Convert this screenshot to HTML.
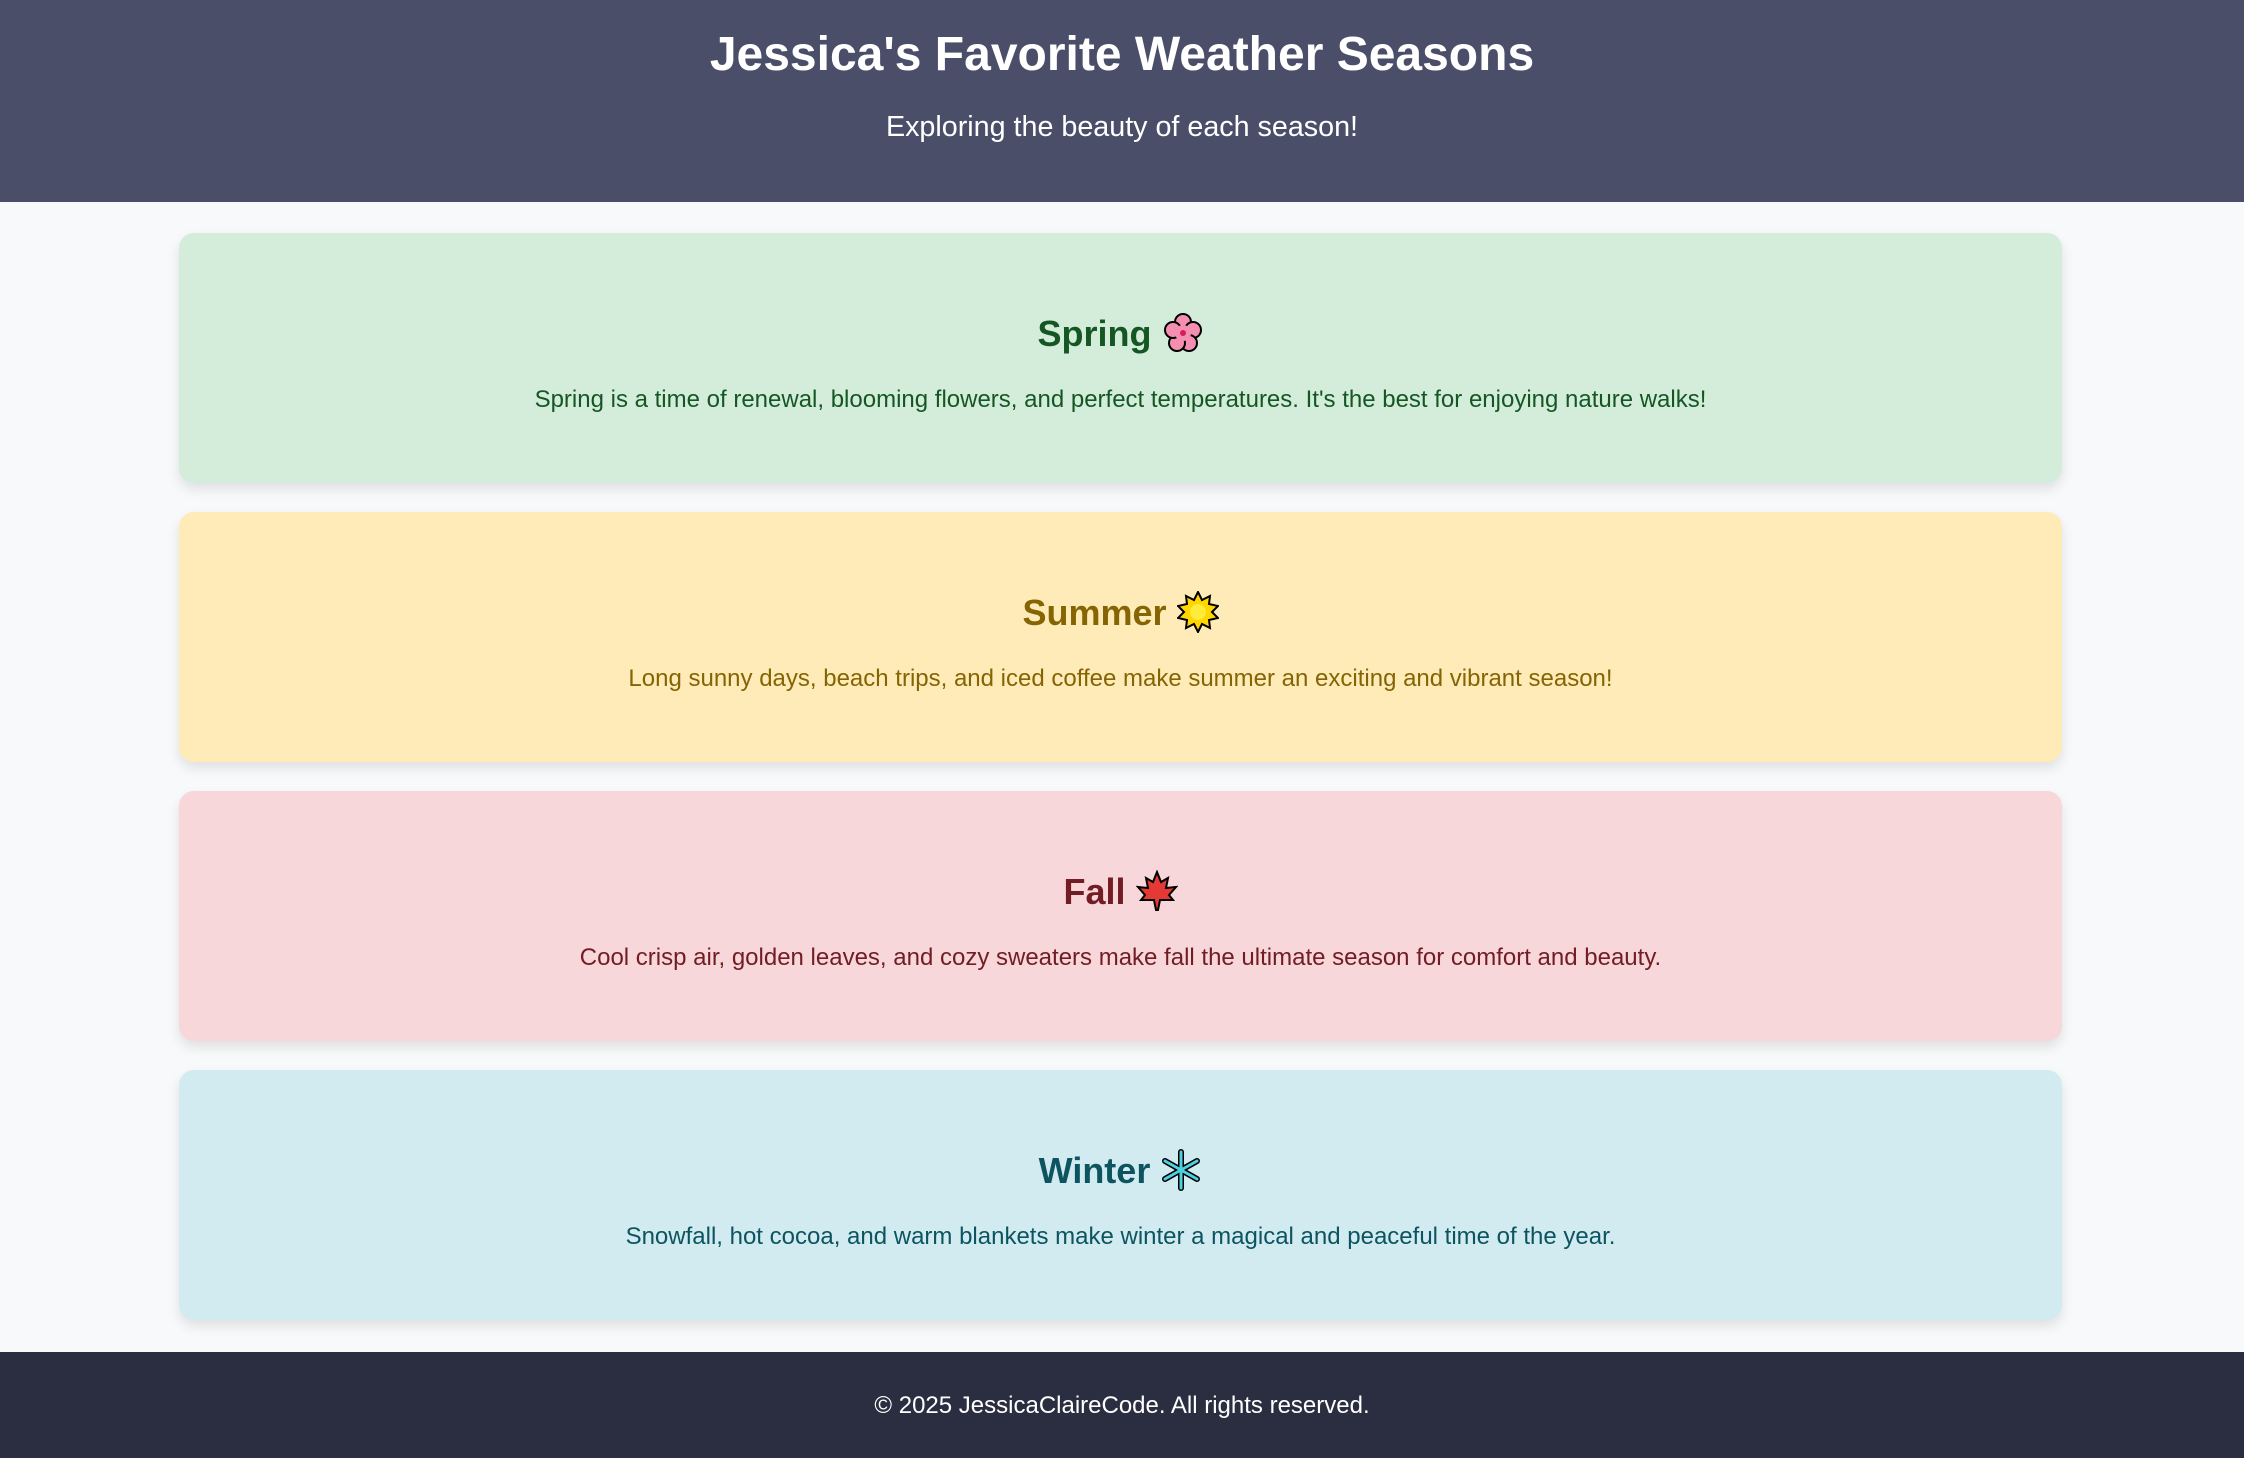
<!DOCTYPE html>
<html><head><meta charset="utf-8">
<style>
*{margin:0;padding:0;box-sizing:border-box}
html,body{width:2244px;height:1458px;overflow:hidden}
body{background:#f8f9fa;font-family:"Liberation Sans",Arial,sans-serif;position:relative}
header{position:absolute;left:0;top:0;width:2244px;height:202px;background:#4a4e69;color:#fff;text-align:center}
header h1{position:absolute;left:0;right:0;top:27px;font-size:48px;line-height:56px;font-weight:bold}
header p{position:absolute;left:0;right:0;top:109px;font-size:28.7px;line-height:36px}
.card{position:absolute;left:179px;width:1883px;height:250px;border-radius:15px;box-shadow:0 6px 12px rgba(0,0,0,0.1);text-align:center}
.card h2{position:absolute;left:0;right:0;top:77px;font-size:36px;line-height:48px;font-weight:bold}
.card h2 svg{vertical-align:-8px}
.card p{position:absolute;left:0;right:0;top:152px;font-size:24px;line-height:30px}
footer{position:absolute;left:0;top:1352px;width:2244px;height:106px;background:#2b2d40;color:#fff;text-align:center;font-size:24px;line-height:108px}
</style></head><body>
<header><h1>Jessica's Favorite Weather Seasons</h1><p>Exploring the beauty of each season!</p></header>

<div class="card" style="top:233px;background:#d4edda;color:#155724"><h2>Spring <svg width="42" height="42" viewBox="0 0 42 42"><g stroke="#000" stroke-width="2" fill="#f48fb1"><circle cx="21" cy="10" r="8"/><circle cx="31" cy="18" r="8"/><circle cx="27" cy="31" r="8"/><circle cx="15" cy="31" r="8"/><circle cx="11" cy="18" r="8"/></g><circle cx="21" cy="21" r="8" fill="#f48fb1"/><circle cx="21" cy="21" r="3" fill="#d81b60"/></svg></h2><p>Spring is a time of renewal, blooming flowers, and perfect temperatures. It's the best for enjoying nature walks!</p></div>

<div class="card" style="top:512px;background:#ffebb8;color:#856404"><h2>Summer <svg width="42" height="42" viewBox="0 0 42 42"><polygon points="21,1 25,9 33,5 32,13 41,15 35,21 41,27 32,29 33,37 25,33 21,41 17,33 9,37 10,29 1,27 7,21 1,15 10,13 9,5 17,9" fill="#ffd600" stroke="#000" stroke-width="2"/><circle cx="21" cy="21" r="8" fill="#ffeb3b"/></svg></h2><p>Long sunny days, beach trips, and iced coffee make summer an exciting and vibrant season!</p></div>

<div class="card" style="top:791px;background:#f7d7da;color:#721c24"><h2>Fall <svg width="42" height="42" viewBox="0 0 42 42"><polygon points="21,2 25,12 32,8 30,18 40,17 33,25 37,30 24,30 22,40 20,40 18,30 5,30 9,25 2,17 12,18 10,8 17,12" fill="#e53935" stroke="#000" stroke-width="2"/></svg></h2><p>Cool crisp air, golden leaves, and cozy sweaters make fall the ultimate season for comfort and beauty.</p></div>

<div class="card" style="top:1070px;background:#d1ebf0;color:#0c5460"><h2>Winter <svg width="42" height="42" viewBox="0 0 42 42"><g stroke="#000" stroke-width="6" stroke-linecap="round"><line x1="21" y1="3" x2="21" y2="39"/><line x1="5" y1="12" x2="37" y2="30"/><line x1="5" y1="30" x2="37" y2="12"/></g><g stroke="#4dd0e1" stroke-width="3" stroke-linecap="round"><line x1="21" y1="3" x2="21" y2="39"/><line x1="5" y1="12" x2="37" y2="30"/><line x1="5" y1="30" x2="37" y2="12"/></g></svg></h2><p>Snowfall, hot cocoa, and warm blankets make winter a magical and peaceful time of the year.</p></div>

<footer>© 2025 JessicaClaireCode. All rights reserved.</footer>
</body></html>
